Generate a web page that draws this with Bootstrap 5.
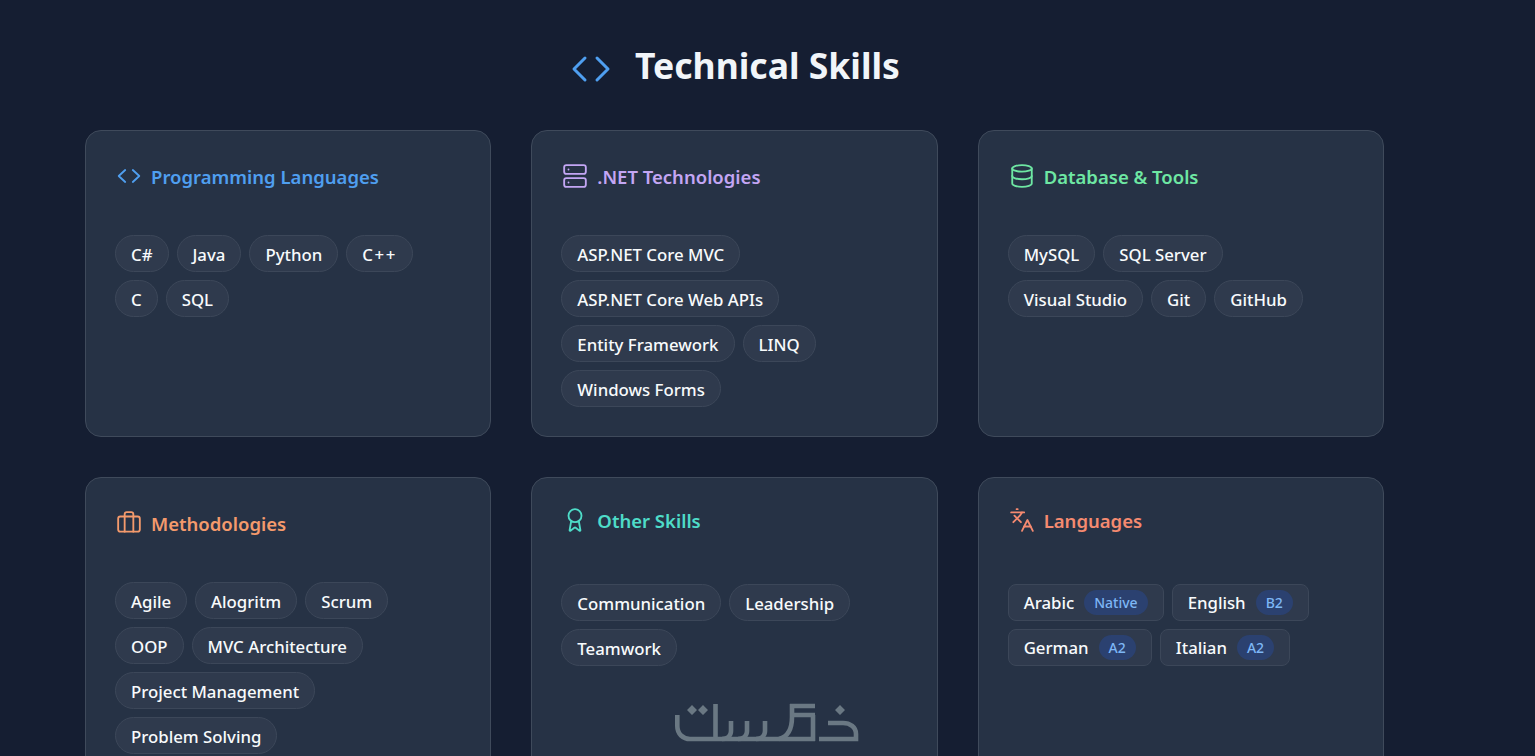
<!DOCTYPE html>
<html lang="en">
<head>
  <meta charset="UTF-8" />
  <title>Technical Skills</title>
  <link href="https://cdn.jsdelivr.net/npm/bootstrap@5.3.3/dist/css/bootstrap.min.css" rel="stylesheet" />
  <style>
    body {
      background-color: #151e32;
      font-family: "Noto Sans", "Open Sans", sans-serif;
      color: #f1f5f9;
      overflow: hidden;
      height: 756px;
    }
    .seccion {
      position: relative;
      padding: 36px 151px 0 85px;
    }
    .titulo {
      font-size: 35.5px;
      font-weight: 700;
      line-height: 58px;
      margin: 0 0 36px;
      padding-right: 3px;
      gap: 20px;
      color: #f1f5f9;
    }
    .titulo svg { margin: 8px 0 0 1px; }
    .rejilla {
      --bs-gutter-x: 40px;
      --bs-gutter-y: 40px;
    }
    .tarjeta {
      background-color: #263245;
      border: 1px solid #3f4a5b;
      border-radius: 16px;
      padding: 29px;
      color: #f1f5f9;
    }
    .cabecera {
      font-size: 18.5px;
      font-weight: 600;
      line-height: 34px;
      height: 34px;
      gap: 8px;
      margin: 0 0 41px;
    }
    .cabecera.alta { margin-top: -3px; margin-bottom: 46px; }
    .cabecera svg { flex: none; margin: -3px 1px 0; }
    .azul { color: #4f9ff0; }
    .lila { color: #c3a6f4; }
    .verde { color: #6ee7a3; }
    .naranja { color: #f49a6c; }
    .turquesa { color: #4edcc8; }
    .salmon { color: #f58a70; }
    .etiqueta {
      background-color: #2f3a4d;
      border: 1px solid #3c4759;
      color: #f8fafc;
      font-size: 16.8px;
      font-weight: 500;
      line-height: 35px;
      height: 37px;
      padding: 1px 15px 0;
      white-space: nowrap;
    }
    .espaciada { letter-spacing: 1.6px; }
    .idioma {
      border-radius: 8px;
      padding-top: 0;
      gap: 10px;
    }
    .nivel {
      background-color: #2b4170;
      color: #7db6f5;
      font-size: 14px;
      letter-spacing: 0;
      line-height: 25px;
      height: 25px;
      padding: 0 10px;
    }
    .marca {
      position: absolute;
      left: 675px;
      top: 703px;
      color: #6a7883;
    }
  </style>
</head>
<body>
  <section class="seccion">
    <h1 class="titulo d-flex justify-content-center align-items-center">
      <svg width="48" height="48" viewBox="0 0 24 24" fill="none" stroke="#4f9ff0" stroke-width="1.5" stroke-linecap="round" stroke-linejoin="round"><polyline points="9 6.5 3.5 12 9 17.5"/><polyline points="15 6.5 20.5 12 15 17.5"/></svg>
      <span>Technical Skills</span>
    </h1>

    <div class="row row-cols-3 rejilla">
      <div class="col">
        <div class="card h-100 tarjeta">
          <h5 class="cabecera d-flex align-items-center azul">
            <svg width="26" height="26" viewBox="0 0 24 24" fill="none" stroke="currentColor" stroke-width="1.7" stroke-linecap="round" stroke-linejoin="round"><polyline points="8.5 6.5 2.5 12 8.5 17.5"/><polyline points="15.5 6.5 21.5 12 15.5 17.5"/></svg>
            Programming Languages
          </h5>
          <div class="d-flex flex-wrap gap-2">
            <span class="etiqueta rounded-pill">C#</span>
            <span class="etiqueta rounded-pill">Java</span>
            <span class="etiqueta rounded-pill">Python</span>
            <span class="etiqueta espaciada rounded-pill">C++</span>
            <span class="etiqueta rounded-pill">C</span>
            <span class="etiqueta rounded-pill">SQL</span>
          </div>
        </div>
      </div>
      <div class="col">
        <div class="card h-100 tarjeta">
          <h5 class="cabecera d-flex align-items-center lila">
            <svg width="26" height="26" viewBox="0 0 24 24" fill="none" stroke="currentColor" stroke-width="1.7" stroke-linecap="round" stroke-linejoin="round"><rect x="2" y="2" width="20" height="8" rx="2"/><rect x="2" y="14" width="20" height="8" rx="2"/><line x1="6" y1="6" x2="6.01" y2="6"/><line x1="6" y1="18" x2="6.01" y2="18"/></svg>
            .NET Technologies
          </h5>
          <div class="d-flex flex-wrap gap-2">
            <span class="etiqueta rounded-pill">ASP.NET Core MVC</span>
            <span class="etiqueta rounded-pill">ASP.NET Core Web APIs</span>
            <span class="etiqueta rounded-pill">Entity Framework</span>
            <span class="etiqueta rounded-pill">LINQ</span>
            <span class="etiqueta rounded-pill">Windows Forms</span>
          </div>
        </div>
      </div>
      <div class="col">
        <div class="card h-100 tarjeta">
          <h5 class="cabecera d-flex align-items-center verde">
            <svg width="26" height="26" viewBox="0 0 24 24" fill="none" stroke="currentColor" stroke-width="1.7" stroke-linecap="round" stroke-linejoin="round"><ellipse cx="12" cy="5" rx="9" ry="3"/><path d="M3 5V19A9 3 0 0 0 21 19V5"/><path d="M3 12A9 3 0 0 0 21 12"/></svg>
            Database &amp; Tools
          </h5>
          <div class="d-flex flex-wrap gap-2">
            <span class="etiqueta rounded-pill">MySQL</span>
            <span class="etiqueta rounded-pill">SQL Server</span>
            <span class="etiqueta rounded-pill">Visual Studio</span>
            <span class="etiqueta rounded-pill">Git</span>
            <span class="etiqueta rounded-pill">GitHub</span>
          </div>
        </div>
      </div>
      <div class="col">
        <div class="card h-100 tarjeta">
          <h5 class="cabecera d-flex align-items-center naranja">
            <svg width="26" height="26" viewBox="0 0 24 24" fill="none" stroke="currentColor" stroke-width="1.7" stroke-linecap="round" stroke-linejoin="round"><path d="M16 20V4a2 2 0 0 0-2-2h-4a2 2 0 0 0-2 2v16"/><rect x="2" y="6" width="20" height="14" rx="2"/></svg>
            Methodologies
          </h5>
          <div class="d-flex flex-wrap gap-2">
            <span class="etiqueta rounded-pill">Agile</span>
            <span class="etiqueta rounded-pill">Alogritm</span>
            <span class="etiqueta rounded-pill">Scrum</span>
            <span class="etiqueta rounded-pill">OOP</span>
            <span class="etiqueta rounded-pill">MVC Architecture</span>
            <span class="etiqueta rounded-pill">Project Management</span>
            <span class="etiqueta rounded-pill">Problem Solving</span>
          </div>
        </div>
      </div>
      <div class="col">
        <div class="card h-100 tarjeta">
          <h5 class="cabecera alta d-flex align-items-center turquesa">
            <svg width="26" height="26" viewBox="0 0 24 24" fill="none" stroke="currentColor" stroke-width="1.7" stroke-linecap="round" stroke-linejoin="round"><path d="m15.477 12.89 1.515 8.526a.5.5 0 0 1-.81.47l-3.58-2.687a1 1 0 0 0-1.197 0l-3.586 2.686a.5.5 0 0 1-.81-.469l1.514-8.526"/><circle cx="12" cy="8" r="6"/></svg>
            Other Skills
          </h5>
          <div class="d-flex flex-wrap gap-2">
            <span class="etiqueta rounded-pill">Communication</span>
            <span class="etiqueta rounded-pill">Leadership</span>
            <span class="etiqueta rounded-pill">Teamwork</span>
          </div>
        </div>
      </div>
      <div class="col">
        <div class="card h-100 tarjeta">
          <h5 class="cabecera alta d-flex align-items-center salmon">
            <svg width="26" height="26" viewBox="0 0 24 24" fill="none" stroke="currentColor" stroke-width="1.7" stroke-linecap="round" stroke-linejoin="round"><path d="m5 8 6 6"/><path d="m4 14 6-6 2-3"/><path d="M2 5h12"/><path d="M7 2h1"/><path d="m22 22-5-10-5 10"/><path d="M14 18h6"/></svg>
            Languages
          </h5>
          <div class="d-flex flex-wrap gap-2">
            <span class="etiqueta idioma d-flex align-items-center">Arabic <span class="nivel rounded-pill">Native</span></span>
            <span class="etiqueta idioma d-flex align-items-center">English <span class="nivel rounded-pill">B2</span></span>
            <span class="etiqueta idioma d-flex align-items-center">German <span class="nivel rounded-pill">A2</span></span>
            <span class="etiqueta idioma d-flex align-items-center">Italian <span class="nivel rounded-pill">A2</span></span>
          </div>
        </div>
      </div>
    </div>

    <svg class="marca" width="186" height="40" viewBox="0 0 186 40" fill="none" stroke="currentColor" stroke-width="4.6">
      <path d="M2.3 12V23C2.3 31 8 36 15 36H104"/>
      <path d="M40.5 1V36"/>
      <path d="M56 18V28C56 33 52 36 47 36M72 18V28C72 33 68 36 63 36M90 18V28C90 33 86 36 81 36"/>
      <path d="M104 36C112 34 117 28 117 14"/>
      <path d="M115 3H140M117 1V14M115 12H140M138 12V38M104 36H140"/>
      <path d="M144 36H181V31C181 24 175 20 168 20H153"/>
      <path fill="currentColor" stroke="none" d="M17 2l5 5-5 5-5-5zM28 2l5 5-5 5-5-5zM165 2l5 5-5 5-5-5z"/>
    </svg>
  </section>
</body>
</html>
